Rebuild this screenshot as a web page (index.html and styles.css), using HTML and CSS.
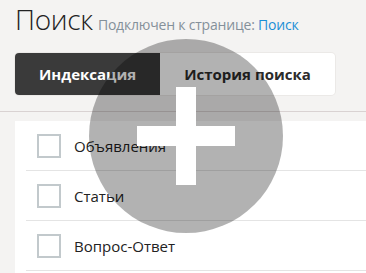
FILE: index.html
```html
<!DOCTYPE html>
<html lang="ru">
<head>
  <meta charset="UTF-8">
  <title>Поиск</title>
  <link rel="stylesheet" href="styles.css">
</head>
<body>
  <div class="page-head">
    <h1>Поиск</h1>
    <span class="sub">Подключен к странице: <a href="#">Поиск</a></span>
  </div>

  <div class="tabs">
    <div class="tab active">Индексация</div>
    <div class="tab">История поиска</div>
  </div>

  <div class="divider"></div>

  <div class="panel">
    <label class="row"><span class="box"></span>Объявления</label>
    <label class="row"><span class="box"></span>Статьи</label>
    <label class="row"><span class="box"></span>Вопрос-Ответ</label>
  </div>

  <div class="add-btn">
    <span class="bar-h"></span>
    <span class="bar-v"></span>
  </div>
</body>
</html>
```

FILE: styles.css
```css
body {
  margin: 0;
  background: #f4f3f2;
  font-family: "Open Sans", "Noto Sans", sans-serif;
  color: #222;
  overflow: hidden;
}

.page-head {
  padding: 0 15px;
  display: flex;
  align-items: baseline;
  gap: 5px;
  height: 53px;
}

h1 {
  margin: 0;
  font-size: 28px;
  font-weight: 300;
  letter-spacing: -0.3px;
  color: #222;
}

.sub {
  font-size: 14px;
  letter-spacing: -0.2px;
  color: #84909a;
}

.sub a {
  color: #1b8fd6;
  text-decoration: none;
}

.tabs {
  display: flex;
  margin-left: 15px;
  width: 320px;
  height: 42px;
  background: #fff;
  border-radius: 4px;
  box-shadow: 0 0 0 1px #ebe9e7;
}

.tab {
  display: flex;
  align-items: center;
  justify-content: center;
  font-size: 15px;
  font-weight: 700;
  color: #2b2b2b;
  flex: 1;
}

.tab.active {
  flex: 0 0 145px;
  background: #3a3a3a;
  color: #fff;
  border-radius: 4px 0 0 4px;
}

.divider {
  height: 1px;
  background: #d9d2d2;
  margin-top: 16px;
}

.panel {
  margin: 9px 0 0 15px;
  background: #fff;
  padding-left: 11px;
  height: 152px;
}

.row {
  display: flex;
  align-items: center;
  height: 49px;
  border-bottom: 1px solid #e4e4e4;
  padding-left: 11px;
  font-size: 15px;
}

.box {
  width: 20px;
  height: 20px;
  border: 2px solid #c2c9cc;
  margin-right: 13px;
}

.add-btn {
  position: absolute;
  left: 89px;
  top: 39px;
  width: 194px;
  height: 194px;
  border-radius: 50%;
  background: rgba(0, 0, 0, 0.3);
}

.bar-h, .bar-v {
  position: absolute;
  background: #fff;
}

.bar-h {
  left: 48px;
  top: 87px;
  width: 98px;
  height: 20px;
}

.bar-v {
  left: 87px;
  top: 48px;
  width: 20px;
  height: 98px;
}
```
